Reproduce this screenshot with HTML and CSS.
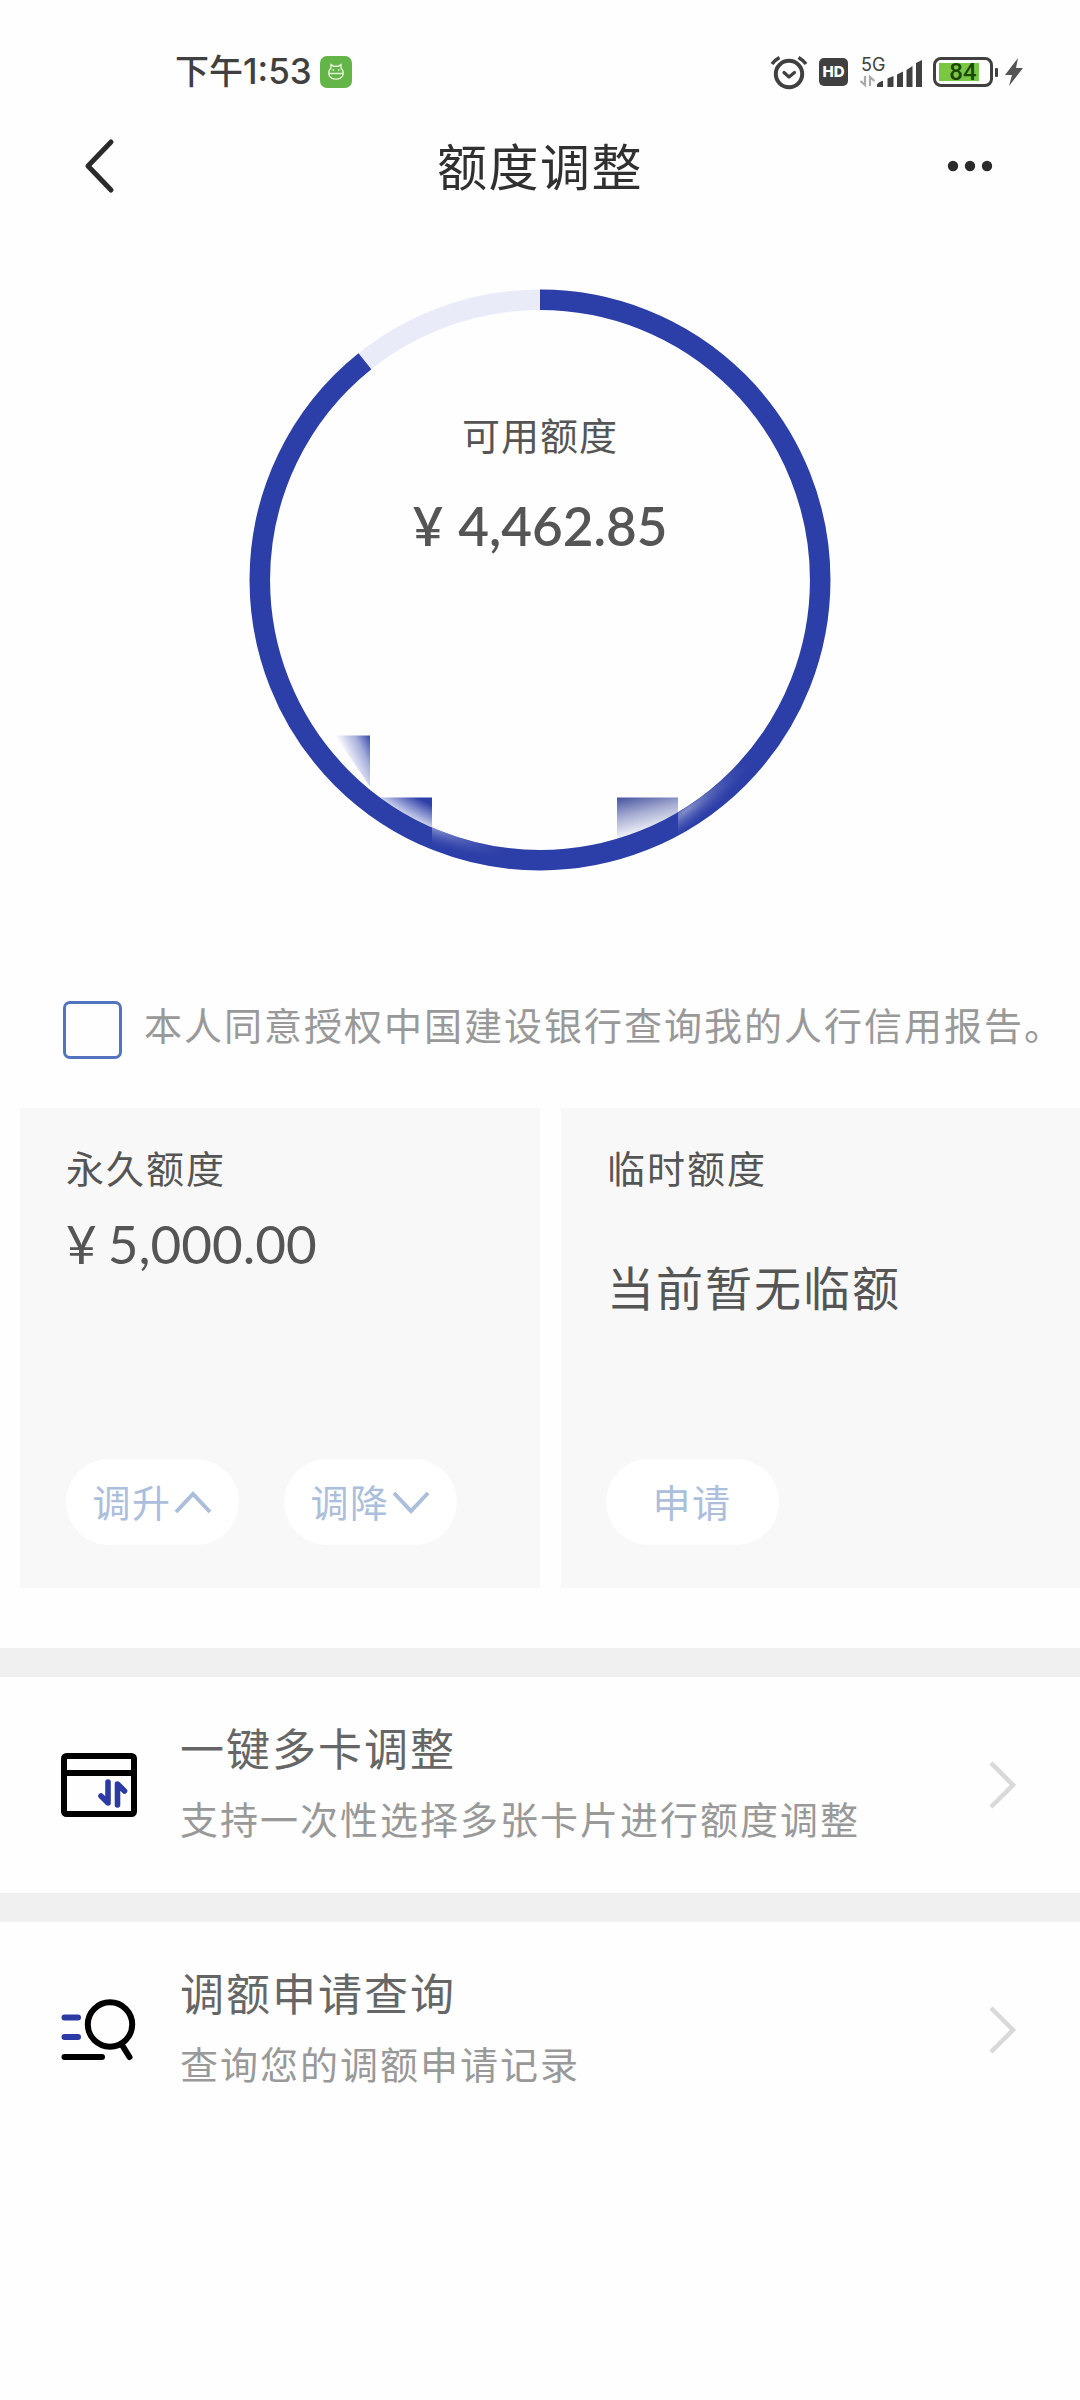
FILE: index.html
```html
<!DOCTYPE html>
<html lang="zh-CN">
<head>
<meta charset="utf-8">
<title>额度调整</title>
<link rel="stylesheet" href="styles.css">
</head>
<body>
<div class="status">
  <span class="time">下午<b class="clock">1:53</b></span>
  <svg class="app" width="32" height="32" viewBox="0 0 32 32">
    <rect width="32" height="32" rx="7" fill="#62b546"/>
    <g fill="none" stroke="#e4f6d8" stroke-width="1.4">
      <path d="M11 12V8.5l2.5 1.7h5L21 8.500V12c2 2 2.500 5 2 7a7.500 6.500 0 0 1-14 0c-.5-2 0-5 2-7z"/>
      <path d="M9 17.500h14M12.500 14h1.500M18 14h1.500"/>
    </g>
  </svg>
  <div class="indicators">
    <svg width="40" height="36" viewBox="0 0 40 36" fill="none" stroke="#404040" stroke-linecap="round" stroke-linejoin="round">
      <circle cx="20" cy="20" r="13.200" stroke-width="4"/>
      <path d="M15 18.500l5 4.500 5.500-4.500" stroke-width="3.200"/>
      <path d="M3 10q3-4 7.500-6.500M37 10q-3-4-7.500-6.500" stroke-width="3.600" stroke-linecap="butt"/>
    </svg>
    <span class="hd">HD</span>
    <svg class="signal" width="62" height="36" viewBox="0 -4 62 36" fill="#404040">
      <text class="net" x="1" y="14">5G</text>
      <path d="M5 19v9l-4.500-4M10 29v-9l4.500 4" fill="none" stroke="#aaa" stroke-width="2.200"/>
      <path d="M17 30v-2q0-2 5-4l1-.3V30zM27.500 30V21.500l6-2.500v11zM37 30V17.500l6-3V30zM46.500 30V13l6-4v21zM56 30V6l6-3v27z"/>
    </svg>
    <span class="battery">84</span>
    <svg class="bolt" width="18" height="28" viewBox="0 0 18 28"><path d="M13 0L0 17h7L4 28 18 10h-7z" fill="#555"/></svg>
  </div>
</div>

<div class="nav">
  <svg width="34" height="60" viewBox="0 0 34 60" fill="none" stroke="#2a2a2a" stroke-width="5" stroke-linecap="round" stroke-linejoin="round"><path d="M28 6L5 30l23 24"/></svg>
  <h1 class="title">额度调整</h1>
  <svg width="48" height="12" viewBox="0 0 48 12" fill="#2a2a2a"><circle cx="7" cy="6" r="5.200"/><circle cx="24" cy="6" r="5.200"/><circle cx="41" cy="6" r="5.200"/></svg>
</div>

<div class="gauge">
  <svg class="ring" width="582" height="582" viewBox="249 288.500 582 582">
    <defs>
      <linearGradient id="g1" gradientUnits="userSpaceOnUse" x1="373" y1="738" x2="343" y2="752">
        <stop offset="0" stop-color="#2c3ea7"/><stop offset=".45" stop-color="#a5aedb"/><stop offset="1" stop-color="#fff"/>
      </linearGradient>
      <radialGradient id="g2" gradientUnits="userSpaceOnUse" cx="540" cy="579.500" r="274">
        <stop offset=".91" stop-color="#2c3ea7"/><stop offset="1" stop-color="#e8ebf8"/>
      </radialGradient>
      <linearGradient id="g3" gradientUnits="userSpaceOnUse" x1="640" y1="792" x2="650" y2="834">
        <stop offset="0" stop-color="#47549f"/><stop offset=".45" stop-color="#a5acd1"/><stop offset="1" stop-color="#fff"/>
      </linearGradient>
      <radialGradient id="g4" cx="0" cy="0" r="1" gradientUnits="userSpaceOnUse" gradientTransform="translate(434 828) rotate(18) scale(80 17)">
        <stop offset="0" stop-color="#a3acdc" stop-opacity=".7"/><stop offset="1" stop-color="#4456b4" stop-opacity="0"/>
      </radialGradient>
      <radialGradient id="g5" cx="0" cy="0" r="1" gradientUnits="userSpaceOnUse" gradientTransform="translate(686 810) rotate(-38) scale(85 17)">
        <stop offset="0" stop-color="#a0a8d4" stop-opacity=".75"/><stop offset="1" stop-color="#4456b4" stop-opacity="0"/>
      </radialGradient>
    </defs>
    <path d="M335 735h35v51z" fill="url(#g1)"/>
    <path d="M372 797h60v45z" fill="url(#g2)"/>
    <path d="M617 797h61v28l-61 20z" fill="url(#g3)"/>
    <circle cx="540" cy="579.500" r="280.200" fill="none" stroke="#e9ecf8" stroke-width="20.500"/>
    <circle cx="540" cy="579.500" r="280.200" fill="none" stroke="#2c3ea7" stroke-width="20.500" pathLength="100" stroke-dasharray="89.257 100" transform="rotate(-90 540 579.500)"/>
    <path d="M432 827A270 270 0 0 0 530 849.300V869.800A290 290 0 0 1 432 849z" fill="url(#g4)"/>
    <path d="M678 812A270 270 0 0 0 765 729L782 741A290 290 0 0 1 678 835z" fill="url(#g5)"/>
  </svg>
  <div class="available">
    <div class="label">可用额度</div>
    <div class="amount"><span class="yen">¥</span>4,462.85</div>
  </div>
</div>

<label class="consent"><span class="box"></span><span class="agree">本人同意授权中国建设银行查询我的人行信用报告。</span></label>

<div class="cards">
  <section class="card">
    <div class="name">永久额度</div>
    <div class="value"><span class="yen">¥</span>5,000.00</div>
    <div class="actions">
      <button class="pill">调升<svg width="38" height="24" viewBox="0 0 38 24"><path d="M2 22L19 4l17 18"/></svg></button>
      <button class="pill">调降<svg width="38" height="24" viewBox="0 0 38 24"><path d="M2 3l17 18L36 3"/></svg></button>
    </div>
  </section>
  <section class="card temp">
    <div class="name">临时额度</div>
    <div class="none">当前暂无临额</div>
    <div class="actions"><button class="pill">申请</button></div>
  </section>
</div>

<div class="row">
  <svg class="icon" width="78" height="66" viewBox="0 0 78 66" fill="none" stroke="#000" stroke-width="6">
    <rect x="4" y="4" width="70" height="58" rx="2.500"/><path d="M4 21h70"/>
    <path d="M48 30v21l-7-7M57.500 53V32l7 7" stroke="#2c3aa5" stroke-linecap="round" stroke-linejoin="round" stroke-width="5.600"/>
  </svg>
  <div class="copy"><div class="head">一键多卡调整</div><div class="sub">支持一次性选择多张卡片进行额度调整</div></div>
  <svg class="chev" width="30" height="50" viewBox="0 0 30 50"><path d="M3 3l22 22L3 47"/></svg>
</div>
<div class="row">
  <svg class="icon" width="78" height="66" viewBox="0 0 78 66" fill="none" stroke="#000" stroke-width="6" stroke-linecap="round">
    <circle cx="50" cy="27.500" r="22.200"/><path d="M62 48l7.500 12M4.500 60H42"/>
    <path d="M4.500 20.500H18M4.500 40H18" stroke="#2c3aa5"/>
  </svg>
  <div class="copy"><div class="head">调额申请查询</div><div class="sub">查询您的调额申请记录</div></div>
  <svg class="chev" width="30" height="50" viewBox="0 0 30 50"><path d="M3 3l22 22L3 47"/></svg>
</div>
</body>
</html>
```

FILE: styles.css
```css
* { box-sizing: border-box; }
body {
  margin: 0;
  width: 1080px;
  height: 2400px;
  background: #fefefe;
  font-family: "Noto Sans CJK SC", sans-serif;
  color: #555;
}
.status {
  display: flex;
  align-items: center;
  height: 120px;
  padding: 24px 57px 0 175px;
}
.time {
  width: 145px;
  font-size: 34px;
  line-height: 40px;
  color: #404040;
  font-weight: 500;
  white-space: nowrap;
  margin-bottom: 4px;
}
.clock { font-family: Inter, sans-serif; font-weight: 500; font-size: 35px; }
.indicators { display: flex; align-items: center; margin-left: auto; }
.hd {
  width: 29px;
  height: 28px;
  margin: 0 12px 0 10px;
  border-radius: 5px;
  background: #404040;
  color: #fff;
  font: 800 15px/28px Inter, sans-serif;
  text-align: center;
}
.signal { margin-bottom: 2px; }
.net { font: 400 18px Inter, sans-serif; }
.battery {
  width: 60px;
  height: 30px;
  margin-left: 11px;
  border: 3px solid #404040;
  border-radius: 8px;
  background: linear-gradient(#7bc744, #7bc744) 3px 3px / 40px 18px no-repeat;
  color: #1c4708;
  font: 500 24px/25px Roboto, sans-serif;
  text-align: center;
}
/* battery terminal */
.battery::after {
  content: "";
  display: block;
  width: 3px;
  height: 9px;
  margin: -17px 0 0 59px;
  border-radius: 1px;
  background: #404040;
}
.bolt { flex: none; margin-left: 12px; }
.status, .nav { background: #fefefe; }
.status { height: 120px; margin-bottom: 0; }
.nav {
  display: flex;
  align-items: center;
  justify-content: space-between;
  height: 92px;
  padding: 0 86px 0 83px;
}
.title {
  margin: 0 0 5px 17px;
  font-size: 50px;
  line-height: 60px;
  letter-spacing: 1.5px;
  font-weight: 400;
  color: #303030;
}
.gauge { display: grid; justify-items: center; height: 770px; padding-top: 76.500px; }
.ring, .available { grid-area: 1 / 1; }
.available { padding-top: 120px; text-align: center; }
.label { font-size: 38px; line-height: 50px; letter-spacing: 1px; }
.amount {
  margin-top: 35px;
  font-family: Lato, sans-serif;
  font-size: 53px;
  line-height: 64px;
  font-weight: 600;
}
.yen { margin-right: 15px; }
.consent {
  display: flex;
  gap: 22px;
  height: 126px;
  padding: 19px 0 0 63px;
  font-size: 38px;
  line-height: 50px;
  letter-spacing: 2px;
  color: #999;
  white-space: nowrap;
}
.agree { margin-top: -2px; }
.box { width: 59px; height: 58px; border: 3px solid #5273bd; border-radius: 7px; }
.cards { display: grid; grid-template-columns: 520px 519px; gap: 21px; height: 480px; margin-left: 20px; }
.card { display: flex; flex-direction: column; padding: 34px 46px 43px; background: #f8f8f8; }
.name { font-size: 38px; line-height: 50px; letter-spacing: 2px; }
.value { margin-top: 20px; font-family: Lato, sans-serif; font-size: 53px; line-height: 64px; font-weight: 400; }
.value .yen { margin-right: 11px; }
.none { margin-top: 62px; font-size: 47px; line-height: 64px; letter-spacing: 2px; }
.actions { display: flex; gap: 45px; margin-top: auto; }
.temp { padding-left: 45px; }
.temp .name, .temp .none { padding-left: 1px; }
.pill {
  display: flex;
  align-items: center;
  justify-content: center;
  width: 173px;
  height: 86px;
  padding: 0 1px 3px 0;
  border: 0;
  border-radius: 43px;
  background: #fff;
  color: #abbedb;
  font-family: inherit;
  font-size: 38px;
  letter-spacing: 1.5px;
}
.pill svg { margin: 3px 0 0 2px; fill: none; stroke: #abbedb; stroke-width: 4; }
.row { display: flex; align-items: center; height: 245px; border-top: 29px solid #f0f0f0; padding: 0 62px 0 60px; }
.cards + .row { margin-top: 60px; }
.copy { margin: 0 auto 11px 42px; }
.head { font-size: 44px; line-height: 60px; letter-spacing: 2px; color: #666; }
.sub { margin-top: 16px; font-size: 38px; line-height: 50px; letter-spacing: 2px; color: #999; }
.chev { fill: none; stroke: #d9d9d9; stroke-width: 4.500; }
```
